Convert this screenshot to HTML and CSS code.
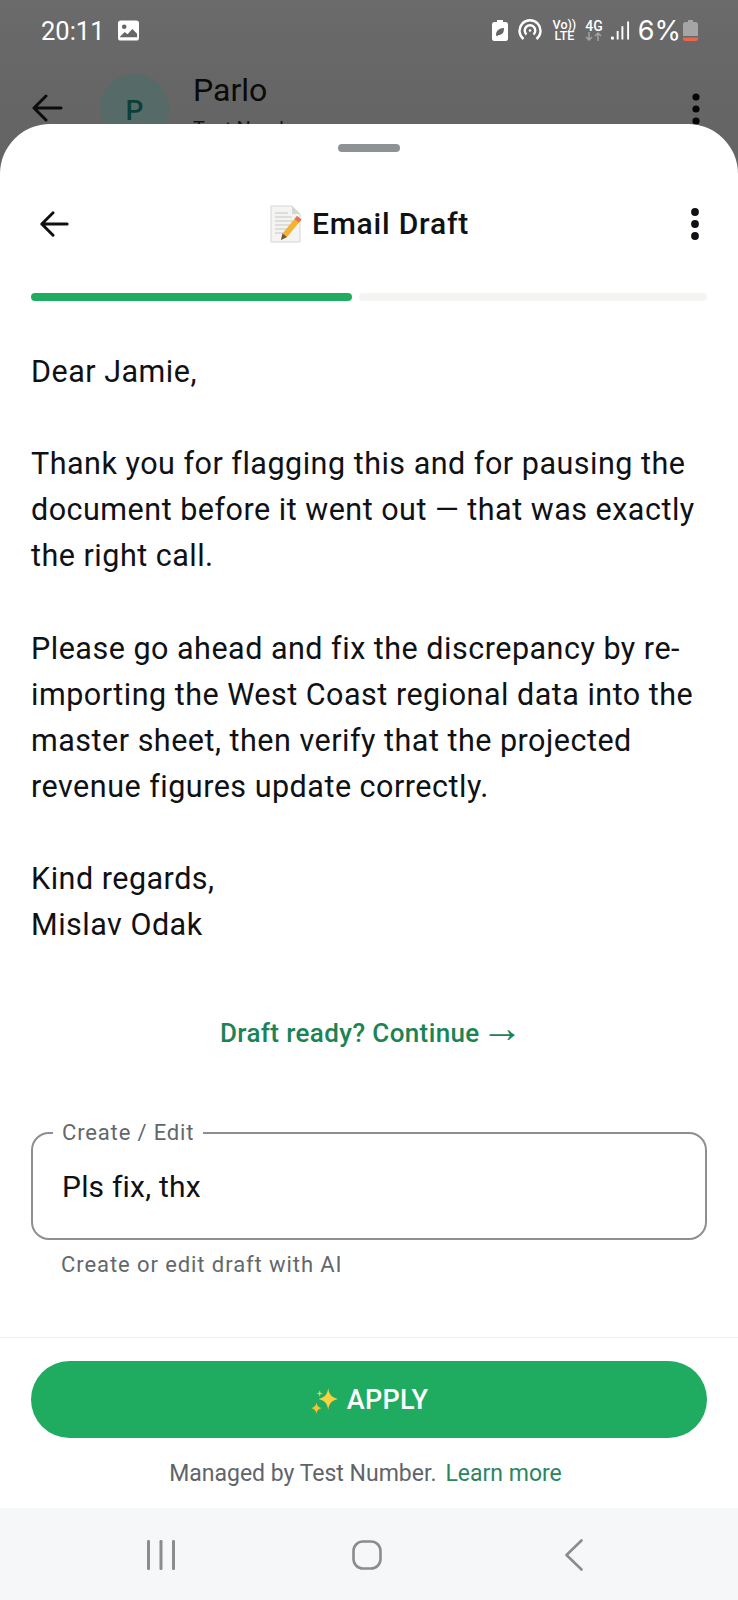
FILE: index.html
```html
<!DOCTYPE html>
<html lang="en">
<head>
<meta charset="utf-8">
<title>Email Draft</title>
<link rel="stylesheet" href="styles.css">
</head>
<body>
<div class="backdrop">
  <div class="status">
    <span class="time">20:11</span>
    <svg class="st-gallery" viewBox="0 0 22 21"><rect width="22" height="21" rx="3" fill="#fff"/><circle cx="6.500" cy="6.500" r="2.400" fill="#666"/><path d="M2 17l5-5 3 2.500 5-5.500 5 5v3.500H2z" fill="#666"/></svg>
    <span class="st-spacer"></span>
    <svg class="st-saver" viewBox="0 0 16 21"><path d="M5 0h6v2h2.500A2.500 2.500 0 0 1 16 4.500V18.500A2.500 2.500 0 0 1 13.500 21H2.500A2.500 2.500 0 0 1 0 18.500V4.500A2.500 2.500 0 0 1 2.500 2H5z" fill="#fff"/><path d="M4 15c0-4 3-7 8-7 0 5-2 7-5.500 7L5 16.500z" fill="#666"/></svg>
    <svg class="st-hotspot" viewBox="0 0 24 22" fill="none" stroke="#fff" stroke-width="2.400"><path d="M5.500 20A10.500 10.500 0 1 1 18.500 20"/><path d="M8.500 15.500A5.300 5.300 0 1 1 15.500 15.500"/><circle cx="12" cy="11.500" r="1.300" fill="#fff" stroke="none"/></svg>
    <span class="st-volte"><span class="vo-line">Vo))</span><span class="vo-line">LTE</span></span>
    <span class="st-4g">4G<svg class="st-arrows" viewBox="0 0 17 9" fill="none" stroke="#a3a3a3" stroke-width="1.500"><path d="M4 0v8M1 5l3 3 3-3M13 9V1M10 4l3-3 3 3"/></svg></span>
    <svg class="st-signal" viewBox="0 0 20 21" fill="#fff"><rect x="0" y="17" width="3" height="3"/><rect x="6" y="11" width="2" height="9"/><rect x="11" y="6" width="2" height="14"/><rect x="17" y="1" width="2" height="19"/></svg>
    <span class="st-pct">6%</span>
    <svg class="st-batt" viewBox="0 0 15 21"><path d="M5 0h5v2h2.500A2.500 2.500 0 0 1 15 4.500V16H0V4.500A2.500 2.500 0 0 1 2.500 2H5z" fill="#a5a5a5"/><path d="M0 17.500h15V18.500A2.500 2.500 0 0 1 12.500 21H2.500A2.500 2.500 0 0 1 0 18.500z" fill="#e8694a"/></svg>
  </div>
  <div class="chat-head">
    <svg class="back-dim" viewBox="0 0 32 28" fill="none" stroke="#0c0c0c" stroke-width="3" stroke-linecap="round" stroke-linejoin="round"><path d="M30 14H3M15 2L3 14l12 12"/></svg>
    <span class="avatar">P</span>
    <span class="chat-titles"><span class="chat-name">Parlo</span><span class="chat-sub">Test Number</span></span>
    <svg class="more-dim" viewBox="0 0 10 34" fill="#050505"><circle cx="5" cy="4" r="3.600"/><circle cx="5" cy="16" r="3.600"/><circle cx="5" cy="28" r="3.600"/></svg>
  </div>
</div>

<main class="sheet">
  <div class="handle"></div>
  <header class="sheet-head">
    <svg class="back" viewBox="0 0 32 28" fill="none" stroke="#0f1114" stroke-width="3.200" stroke-linecap="round" stroke-linejoin="round"><path d="M30 14H3M15 2L3 14l12 12"/></svg>
    <h1 class="title">
      <svg class="memo" viewBox="0 0 32 38"><path d="M1 1h21l8 8v28H1z" fill="#f4f4f2" stroke="#d5d5d2"/><path d="M22 1v8h8z" fill="#d6d6d3"/><path d="M5 8h13M5 12h17M5 16h18M5 20h15M5 24h12M5 28h9" stroke="#c6c6c3" stroke-width="1"/><path d="M27 11l4.500 3.500L17 32l-6 3 1.500-6.500z" fill="#f5b131"/><path d="M27 11l4.500 3.500-2.500 3-4.500-3.500z" fill="#e56f5f"/><path d="M12.500 28.500L17 32l-6 3z" fill="#6b5a45"/></svg>
      <span>Email Draft</span>
    </h1>
    <svg class="more" viewBox="0 0 10 34" fill="#0f1114"><circle cx="5" cy="5" r="3.900"/><circle cx="5" cy="17" r="3.900"/><circle cx="5" cy="29" r="3.900"/></svg>
  </header>
  <div class="progress"><span class="seg seg-on"></span><span class="seg seg-off"></span></div>

  <article class="draft">
    <p>Dear Jamie,</p>
    <p>Thank you for flagging this and for pausing the document before it went out — that was exactly the right call.</p>
    <p>Please go ahead and fix the discrepancy by re-importing the West Coast regional data into the master sheet, then verify that the projected revenue figures update correctly.</p>
    <p>Kind regards,<br>Mislav Odak</p>
  </article>

  <a class="continue">Draft ready? Continue<span class="arrow">→</span></a>

  <fieldset class="field">
    <legend class="field-label">Create / Edit</legend>
    <div class="field-value">Pls fix, thx</div>
  </fieldset>
  <div class="hint">Create or edit draft with AI</div>

  <footer class="foot">
    <button class="apply">
      <svg class="sparkle" viewBox="0 0 28 28"><path d="M17 3c1 6 3 8.500 9 10-6 1.500-8 4-9 10-1-6-3-8.500-9-10 6-1.500 8-4 9-10z" fill="#fbd13f"/><path d="M6 16c.500 3 1.500 4.500 5 5.500-3.500 1-4.500 2.500-5 5.500-.500-3-1.500-4.500-5-5.500 3.500-1 4.500-2.500 5-5.500z" fill="#fbc02d"/><path d="M9 5l.700 2.300L12 8l-2.300.700L9 11l-.700-2.300L6 8l2.300-.700z" fill="#f7c948"/></svg>
      <span>APPLY</span>
    </button>
    <div class="managed"><span>Managed by Test Number.</span><a class="learn">Learn more</a></div>
  </footer>
</main>

<nav class="navbar">
  <svg class="nav-recent" viewBox="0 0 28 30" fill="#8c8c8c"><rect x="0" y="0" width="3" height="30" rx="1.200"/><rect x="12.500" y="0" width="3" height="30" rx="1.200"/><rect x="25" y="0" width="3" height="30" rx="1.200"/></svg>
  <svg class="nav-home" viewBox="0 0 30 30" fill="none" stroke="#8c8c8c" stroke-width="2.600"><rect x="1.500" y="1.500" width="27" height="27" rx="9.500"/></svg>
  <svg class="nav-back" viewBox="0 0 18 32" fill="none" stroke="#8c8c8c" stroke-width="2.600" stroke-linecap="round" stroke-linejoin="round"><path d="M16.500 1.500L1.500 16l15 14.500"/></svg>
</nav>
</body>
</html>
```

FILE: styles.css
```css
* { box-sizing: border-box; }
html, body { margin: 0; padding: 0; }
body {
  position: relative;
  width: 738px;
  height: 1600px;
  overflow: hidden;
  background: #fff;
  font-family: Roboto, "Noto Sans", sans-serif;
  color: #0f1114;
}
.backdrop {
  height: 200px;
  background: linear-gradient(#6b6b6b, #666 40%, #636363);
}
.status {
  display: flex;
  align-items: center;
  height: 60px;
  padding: 0 40px 0 41px;
  color: #fff;
}
.time { font-size: 25.500px; margin-right: 13px; line-height: 30px; padding-top: 1px; }
.st-gallery { width: 21px; height: 21px; }
.st-spacer { flex: 1; }
.st-saver { width: 16px; height: 21px; margin-right: 10px; }
.st-hotspot { width: 24px; height: 22px; margin-right: 11px; }
.st-volte { display: flex; flex-direction: column; align-items: center; font-size: 12.500px; line-height: 11px; font-weight: 500; margin-right: 9px; }
.vo-line { height: 11px; }
.st-4g { display: flex; flex-direction: column; align-items: center; font-size: 14px; line-height: 12px; font-weight: 500; margin-right: 8px; }
.st-arrows { width: 17px; height: 9px; }
.st-signal { width: 19px; height: 21px; margin-right: 8px; }
.st-pct { font-family: Inter, Roboto, sans-serif; font-size: 27px; font-weight: 400; margin-right: 2px; }
.st-batt { width: 15px; height: 21px; }
.chat-head {
  display: flex;
  align-items: flex-start;
  padding: 14px 0 0 31px;
  height: 140px;
}
.back-dim { width: 32px; height: 28px; margin-top: 20px; }
.avatar {
  width: 69px;
  height: 69px;
  padding-top: 3px;
  margin: 0 0 0 37px;
  border-radius: 50%;
  background: #566a67;
  color: #0c3f38;
  font-size: 28px;
  font-weight: 500;
  display: flex;
  align-items: center;
  justify-content: center;
}
.chat-titles { display: flex; flex-direction: column; margin-left: 24px; margin-top: -2px; flex: 1; }
.chat-name { font-size: 32px; line-height: 36px; color: #0a0a0a; }
.chat-sub { font-size: 20px; line-height: 42px; color: #151515; }
.more-dim { width: 10px; height: 34px; margin: 19px 37px 0 0; }

.sheet {
  position: absolute;
  left: 0;
  top: 124px;
  width: 738px;
  height: 1384px;
  background: #fff;
  border-radius: 50px 50px 0 0;
  display: flex;
  flex-direction: column;
  align-items: stretch;
}
.handle {
  width: 62px;
  height: 8px;
  border-radius: 4px;
  background: #8d9295;
  margin: 20px auto 0;
}
.sheet-head {
  display: grid;
  grid-template-columns: 1fr auto 1fr;
  align-items: center;
  height: 40px;
  margin-top: 52px;
  padding: 0 38px 0 39px;
}
.back { width: 30px; height: 28px; }
.title {
  margin: 0;
  display: flex;
  align-items: center;
  gap: 10px;
  font-size: 30px;
  line-height: 38px;
  font-weight: 500;
  letter-spacing: .8px;
}
.memo { width: 32px; height: 38px; }
.more { width: 10px; height: 34px; justify-self: end; }
.progress {
  display: flex;
  gap: 7px;
  margin: 49px 31px 0;
}
.seg { height: 8px; border-radius: 4px; display: block; }
.seg-on { width: 321px; background: #20ac60; }
.seg-off { flex: 1; background: #f4f4f3; }
.draft {
  margin: 48px 31px 0;
  font-size: 30.500px;
  line-height: 46.100px;
  letter-spacing: .5px;
}
.draft p { margin: 0 0 46.100px; }
.draft p:last-child { margin-bottom: 0; }
.continue {
  margin-top: 65px;
  padding-left: 5px;
  text-align: center;
  font-size: 26px;
  line-height: 40px;
  font-weight: 500;
  letter-spacing: .38px;
  color: #1b8456;
}
.arrow { font-family: "Liberation Sans", sans-serif; font-size: 42px; line-height: 0; font-weight: 400; margin-left: 1px; }
.field {
  margin: 67px 31px 0;
  padding: 0 29px;
  height: 120px;
  border: 2px solid #8e8f91;
  border-radius: 18px;
  min-width: 0;
}
.field-label {
  padding: 0 9px;
  margin-left: -9px;
  font-size: 22px;
  line-height: 26px;
  letter-spacing: .85px;
  color: #62676c;
}
.field-value { font-size: 30px; line-height: 40px; margin-top: 21px; letter-spacing: .2px; }
.hint {
  margin: 9px 61px 0;
  font-size: 22px;
  line-height: 32px;
  letter-spacing: .92px;
  color: #62676c;
}
.foot {
  margin-top: auto;
  border-top: 1px solid #eeeeee;
  padding: 23px 31px 0;
  height: 171px;
  display: flex;
  flex-direction: column;
  align-items: stretch;
}
.apply {
  height: 77px;
  border: 0;
  border-radius: 39px;
  background: #20ac60;
  color: #fff;
  font: 500 27px Roboto, sans-serif;
  letter-spacing: .3px;
  display: flex;
  align-items: center;
  justify-content: center;
  gap: 7px;
  padding-bottom: 1px;
}
.sparkle { width: 30px; height: 30px; }
.managed {
  display: flex;
  justify-content: center;
  gap: 9px;
  margin-top: 20px;
  padding-right: 7px;
  font-size: 23px;
  line-height: 32px;
  color: #5f6469;
}
.learn { color: #2d8560; }
.navbar {
  position: absolute;
  left: 0;
  right: 0;
  bottom: 0;
  height: 92px;
  background: #f6f7f9;
  display: flex;
  align-items: center;
  justify-content: space-between;
  padding: 2px 155px 0 147px;
}
.nav-recent { width: 28px; height: 30px; }
.nav-home { width: 30px; height: 30px; margin-right: 7px; }
.nav-back { width: 18px; height: 32px; }
```
